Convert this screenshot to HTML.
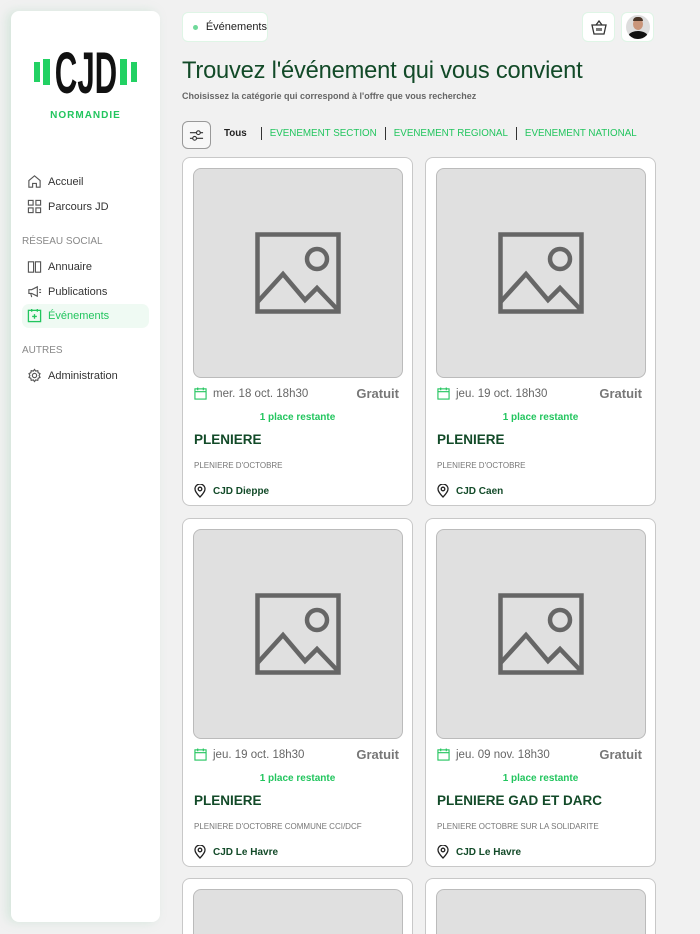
<!DOCTYPE html><html><head><meta charset="utf-8"><style>
*{box-sizing:border-box;margin:0;padding:0}
html,body{width:700px;height:934px;overflow:hidden}
body{background:#f1f1f1;font-family:"Liberation Sans",sans-serif;position:relative}
.side{position:absolute;left:11px;top:11px;width:149px;height:911px;background:#fff;border-radius:8px;box-shadow:-4px 0 10px rgba(160,210,180,.35)}
.nav{position:absolute;left:16px;font-size:11px;color:#333;display:flex;align-items:center;gap:6px}
.sec{position:absolute;left:11px;font-size:10px;color:#888}
.pill{position:absolute;left:182px;top:12px;width:86px;height:30px;background:#fff;border:1px solid #dff5e6;border-radius:6px;font-size:11px;color:#222;display:flex;align-items:center;padding-left:10px;gap:8px}
.pill i{width:5px;height:5px;border-radius:50%;background:#6fd99a;display:block}
.sq{position:absolute;top:12px;width:33px;height:30px;background:#fff;border:1px solid #dff5e6;border-radius:6px;display:flex;align-items:center;justify-content:center}
h1{position:absolute;left:182px;top:58px;font-size:23.7px;font-weight:normal;color:#124a28;letter-spacing:-.2px}
.sub{position:absolute;left:182px;top:91px;font-size:9px;color:#666;font-weight:bold}
.filt{position:absolute;left:182px;top:121px;width:29px;height:28px;border:1px solid #999;border-radius:6px;background:#f7f7f7;display:flex;align-items:center;justify-content:center}
.tabs{position:absolute;left:224px;top:127px;font-size:9.8px;display:flex;align-items:center}
.tabs span{color:#22c55e}
.tabs b{display:inline-block;width:1px;height:13px;background:#333;margin:0 8px}
.card{position:absolute;width:231px;height:349px;background:#fff;border:1px solid #c8c8c8;border-radius:8px}
.img{position:absolute;left:10px;top:10px;width:210px;height:210px;background:#e0e0e0;border:1px solid #bbb;border-radius:8px;display:flex;align-items:center;justify-content:center}
.dt{position:absolute;left:11px;top:229px;font-size:11.5px;color:#666;display:flex;align-items:center;gap:6px}
.pr{position:absolute;right:13px;top:228px;font-size:13px;color:#777;font-weight:bold}
.pl{position:absolute;left:0;right:0;top:254px;text-align:center;font-size:10px;color:#22c55e;font-weight:bold}
.tt{position:absolute;left:11px;top:274px;font-size:13.5px;color:#124a28;font-weight:bold}
.ds{position:absolute;left:11px;top:303px;font-size:8px;color:#777}
.lc{position:absolute;left:11px;top:326px;font-size:10px;color:#124a28;font-weight:bold;display:flex;align-items:center;gap:7px}
</style></head><body>
<div class="side">
<div style="position:absolute;left:23px;top:28px;width:104px;height:68px">
<div style="position:absolute;left:0;top:23px;width:6px;height:20px;background:#22d163"></div>
<div style="position:absolute;left:9px;top:20px;width:7px;height:26px;background:#22d163"></div>
<div style="position:absolute;left:86px;top:20px;width:7px;height:26px;background:#22d163"></div>
<div style="position:absolute;left:97px;top:23px;width:6px;height:20px;background:#22d163"></div>
<div style="position:absolute;left:12px;top:6px;width:80px;font-size:40px;line-height:40px;font-weight:bold;color:#111;text-align:center;transform:scale(.78,1.45);transform-origin:50% 0">CJD</div>
</div>
<div style="position:absolute;left:0;right:0;top:99px;text-align:center;font-size:10px;font-weight:bold;color:#22c55e;letter-spacing:1px">NORMANDIE</div>
<div class="nav" style="top:163px"><svg width="15" height="15" viewBox="0 0 16 16" fill="none" stroke="#555" stroke-width="1.2"><path d="M2 7 8 2l6 5v7H10V10H6v4H2z"/></svg>Accueil</div>
<div class="nav" style="top:188px"><svg width="15" height="15" viewBox="0 0 16 16" fill="none" stroke="#555" stroke-width="1.2"><rect x="1.5" y="1.5" width="5" height="5"/><rect x="9.5" y="1.5" width="5" height="5"/><rect x="1.5" y="9.5" width="5" height="5"/><rect x="9.5" y="9.5" width="5" height="5"/></svg>Parcours JD</div>
<div class="sec" style="top:225px">RÉSEAU SOCIAL</div>
<div class="nav" style="top:248px"><svg width="15" height="15" viewBox="0 0 16 16" fill="none" stroke="#555" stroke-width="1.2"><path d="M1.5 3h5.5v11H1.5zM9 3h5.5v11H9z"/></svg>Annuaire</div>
<div class="nav" style="top:273px"><svg width="15" height="15" viewBox="0 0 16 16" fill="none" stroke="#555" stroke-width="1.2"><path d="M2 6h3l6-3v10L5 10H2zM4 10l1 4M13 6h2M13 9h2"/></svg>Publications</div>
<div style="position:absolute;left:11px;top:293px;width:127px;height:24px;background:#effaf3;border-radius:7px"></div>
<div class="nav" style="top:297px;color:#22c55e"><svg width="15" height="15" viewBox="0 0 16 16" fill="none" stroke="#22c55e" stroke-width="1.4"><rect x="1.5" y="2.5" width="13" height="12"/><path d="M5 1v3M11 1v3M8 6.5v5M5.5 9h5"/></svg>Événements</div>
<div class="sec" style="top:334px">AUTRES</div>
<div class="nav" style="top:357px"><svg width="15" height="15" viewBox="0 0 16 16" fill="none" stroke="#555" stroke-width="1.2"><circle cx="8" cy="8" r="2.3"/><path d="M8 1.5l1.3 1.8 2.2-.5.4 2.2 2 1-1 2 1 2-2 1-.4 2.2-2.2-.5L8 14.5l-1.3-1.8-2.2.5-.4-2.2-2-1 1-2-1-2 2-1 .4-2.2 2.2.5z"/></svg>Administration</div>
</div>
<div class="pill"><i></i>Événements</div>
<div class="sq" style="left:582px"><svg width="16" height="15" viewBox="0 0 16 15" fill="none" stroke="#333" stroke-width="1.3"><path d="M1 5h14l-2 9H3zM5 5l3-4 3 4M6 8v3M8 8v3M10 8v3"/></svg></div>
<div class="sq" style="left:621px"><div style="width:24px;height:24px;border-radius:50%;background:#ddd;overflow:hidden;position:relative"><div style="position:absolute;left:7px;top:3px;width:10px;height:12px;border-radius:50%;background:#c9957a"></div><div style="position:absolute;left:7px;top:2px;width:10px;height:4px;border-radius:5px 5px 0 0;background:#4a3528"></div><div style="position:absolute;left:2px;top:16px;width:20px;height:12px;border-radius:50%;background:#111"></div></div></div>
<h1>Trouvez l'événement qui vous convient</h1>
<div class="sub">Choisissez la catégorie qui correspond à l'offre que vous recherchez</div>
<div class="filt"><svg width="15" height="15" viewBox="0 0 16 16" fill="none" stroke="#333" stroke-width="1.2"><path d="M1 5h14M1 11h14"/><circle cx="10" cy="5" r="2" fill="#f7f7f7"/><circle cx="6" cy="11" r="2" fill="#f7f7f7"/></svg></div>
<div class="tabs"><span style="color:#222;font-weight:bold;margin-right:6px">Tous</span><b></b><span>EVENEMENT SECTION</span><b></b><span>EVENEMENT REGIONAL</span><b></b><span>EVENEMENT NATIONAL</span></div>

<div id="cards"></div>
<script>
var d=[[182,157,"mer. 18 oct. 18h30","PLENIERE","PLENIERE D'OCTOBRE","CJD Dieppe"],[425,157,"jeu. 19 oct. 18h30","PLENIERE","PLENIERE D'OCTOBRE","CJD Caen"],[182,518,"jeu. 19 oct. 18h30","PLENIERE","PLENIERE D'OCTOBRE COMMUNE CCI/DCF","CJD Le Havre"],[425,518,"jeu. 09 nov. 18h30","PLENIERE GAD ET DARC","PLENIERE OCTOBRE SUR LA SOLIDARITE","CJD Le Havre"],[182,878],[425,878]];
var img='<div class="img"><svg width="86" height="82" viewBox="0 0 86 82" fill="none" stroke="#666" stroke-width="4.5"><rect x="2.5" y="2.5" width="81" height="77"/><circle cx="62" cy="27" r="10"/><path d="M2.5 70 28 42l22 26 12-12 21 22"/></svg></div>';
var h='';d.forEach(function(c){h+='<div class="card" style="left:'+c[0]+'px;top:'+c[1]+'px">'+img+(c[2]?'<div class="dt"><svg width="13" height="13" viewBox="0 0 14 14" fill="none" stroke="#22c55e" stroke-width="1.2"><rect x="1" y="2" width="12" height="11"/><path d="M1 5h12M4 .5v3M10 .5v3"/></svg>'+c[2]+'</div><div class="pr">Gratuit</div><div class="pl">1 place restante</div><div class="tt">'+c[3]+'</div><div class="ds">'+c[4]+'</div><div class="lc"><svg width="12" height="14" viewBox="0 0 12 14" fill="none" stroke="#222" stroke-width="1.3"><path d="M6 13S1 8 1 5a5 5 0 0110 0c0 3-5 8-5 8z"/><circle cx="6" cy="5" r="1.8"/></svg>'+c[5]+'</div>':'')+'</div>'});
document.getElementById('cards').innerHTML=h;
</script>
</body></html>
